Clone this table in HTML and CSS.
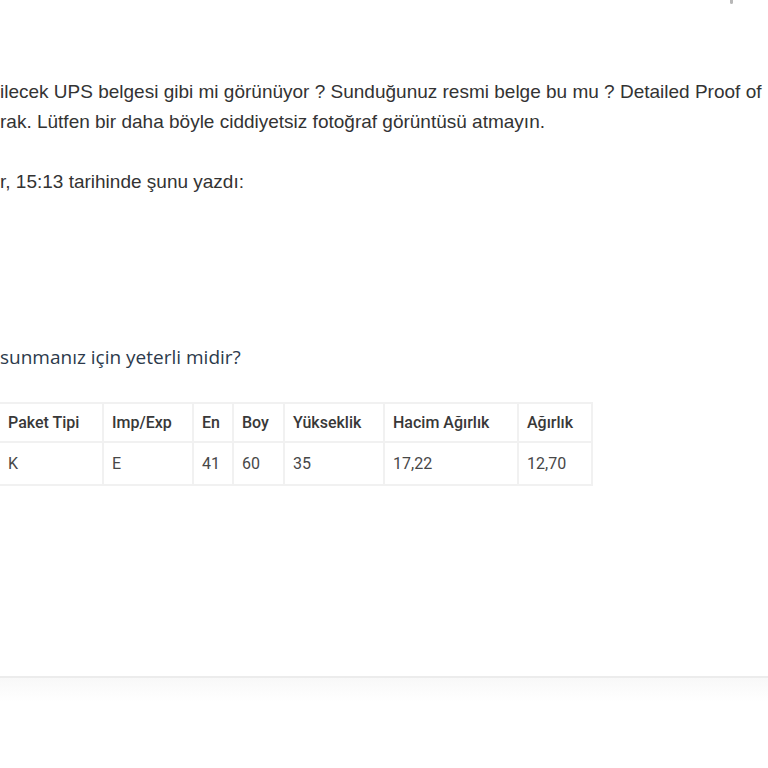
FILE: index.html
```html
<!DOCTYPE html>
<html lang="tr">
<head>
<meta charset="utf-8">
<link rel="stylesheet" href="styles.css">
</head>
<body>
<div class="page">
  <span class="corner-mark"></span>
  <div class="mail">
    <div class="line">ilecek UPS belgesi gibi mi görünüyor ? Sunduğunuz resmi belge bu mu ? Detailed Proof of</div>
    <div class="line">rak. Lütfen bir daha böyle ciddiyetsiz fotoğraf görüntüsü atmayın.</div>
    <div class="line blank">&nbsp;</div>
    <div class="line">r, 15:13 tarihinde şunu yazdı:</div>
  </div>
  <div class="question">sunmanız için yeterli midir?</div>
  <table class="pkg">
    <thead>
      <tr>
        <th class="c1">Paket Tipi</th>
        <th class="c2">Imp/Exp</th>
        <th class="c3">En</th>
        <th class="c4">Boy</th>
        <th class="c5">Yükseklik</th>
        <th class="c6">Hacim Ağırlık</th>
        <th class="c7">Ağırlık</th>
      </tr>
    </thead>
    <tbody>
      <tr>
        <td class="c1">K</td>
        <td class="c2">E</td>
        <td class="c3">41</td>
        <td class="c4">60</td>
        <td class="c5">35</td>
        <td class="c6">17,22</td>
        <td class="c7">12,70</td>
      </tr>
    </tbody>
  </table>
  <div class="footer-rule"></div>
</div>
</body>
</html>
```

FILE: styles.css
```css
html, body {
  margin: 0;
  padding: 0;
  background: #ffffff;
}

.page {
  position: relative;
  width: 768px;
  height: 768px;
  overflow: hidden;
}

.corner-mark {
  position: absolute;
  top: 0;
  left: 730px;
  width: 3px;
  height: 4px;
  background: #b8b8b8;
  border-radius: 0 0 2px 2px;
}

.mail {
  padding-top: 77px;
  font-family: "Liberation Sans", Arial, sans-serif;
  font-size: 19px;
  line-height: 30px;
  color: #333333;
}

.line {
  white-space: nowrap;
}

.question {
  margin-top: 146px;
  font-family: "Open Sans", "Noto Sans", sans-serif;
  font-size: 19px;
  line-height: 28px;
  color: #2c3a4b;
  white-space: nowrap;
}

.pkg {
  margin-top: 31px;
  border-collapse: collapse;
  font-family: Roboto, "Noto Sans", sans-serif;
  font-size: 16px;
  text-align: left;
}

.pkg th,
.pkg td {
  border: 2px solid #f1f1f1;
  padding: 0 0 0 8px;
  white-space: nowrap;
}

.pkg th {
  height: 37px;
  font-weight: 500;
  color: #383838;
}

.pkg td {
  height: 41px;
  font-weight: 400;
  color: #474747;
}

.pkg .c1 { width: 94px; border-left: none; }
.pkg .c2 { width: 80px; }
.pkg .c3 { width: 30px; }
.pkg .c4 { width: 41px; }
.pkg .c5 { width: 90px; }
.pkg .c6 { width: 124px; }
.pkg .c7 { width: 64px; }

.footer-rule {
  margin-top: 190px;
  height: 24px;
  border-top: 2px solid #ececec;
  background: linear-gradient(#f8f8f8, #ffffff);
}
```
